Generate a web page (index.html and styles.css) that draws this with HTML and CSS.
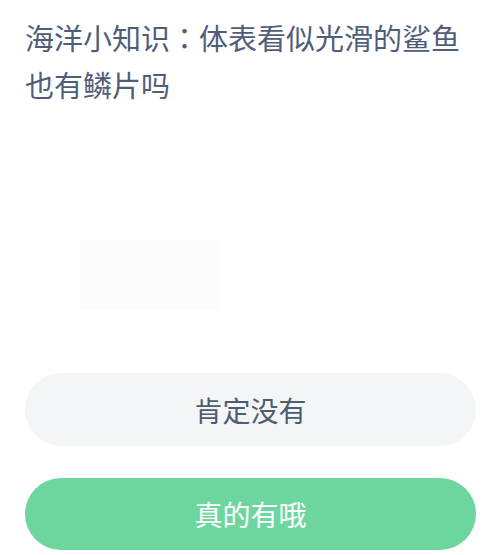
FILE: index.html
```html
<!DOCTYPE html>
<html lang="zh">

<head>
  <meta charset="UTF-8">
  <meta name="viewport" content="width=device-width, initial-scale=1.0">
  <title>海洋小知识</title>
  <link rel="stylesheet" href="styles.css">
</head>

<body>
  <div class="quiz">
    <h1 class="question">海洋小知识<span class="colon" lang="zh-Hant">：</span>体表看似光滑的鲨鱼也有鳞片吗</h1>

    <!-- faded watermark picture behind the question -->
    <div class="figure"></div>

    <div class="answers">
      <button class="answer">肯定没有</button>
      <button class="answer answer-yes">真的有哦</button>
    </div>
  </div>
</body>

</html>
```

FILE: styles.css
```css
body {
  margin: 0;
  background-color: #fff;
  font-family: "Noto Sans CJK SC", "Noto Sans", sans-serif;
}

.quiz {
  padding: 14px 25px 0;
}

.question {
  margin: 0;
  font-size: 29px;
  font-weight: 400;
  line-height: 47px;
  color: #4f5d7b;
}

/* centred full-width colon, as on the phone */
.colon {
  font-family: "Noto Sans CJK TC", sans-serif;
}

.figure {
  width: 140px;
  height: 70px;
  margin: 132px 0 0 55px;
  background-color: #fcfcfc;
}

.answers {
  display: flex;
  flex-direction: column;
  gap: 32px;
  margin-top: 63px;
}

.answer {
  height: 73px;
  border: none;
  border-radius: 37px;
  background-color: #f4f5f7;
  font-family: inherit;
  font-size: 28px;
  color: #4e5c70;
}

.answer-yes {
  height: 72px;
  background-color: #6dd69f;
  color: #fff;
}
```
